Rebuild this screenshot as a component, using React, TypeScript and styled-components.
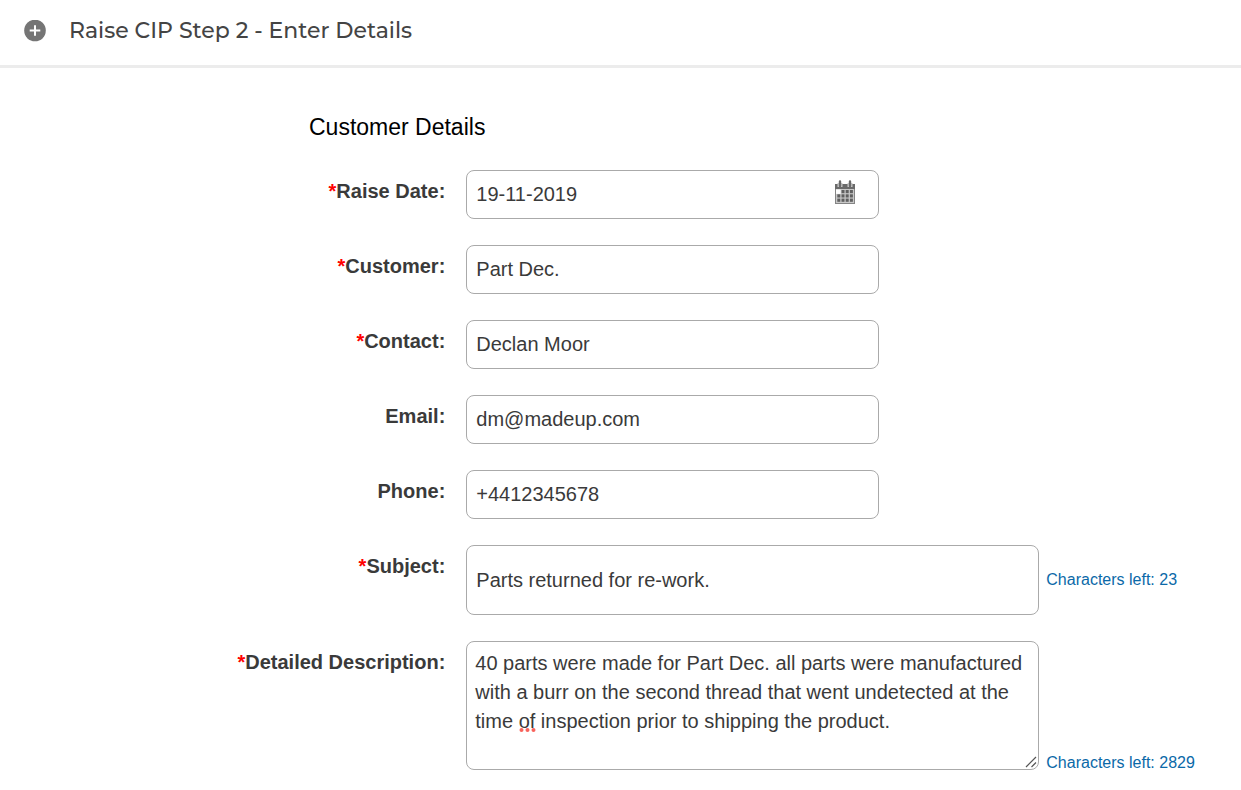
import React, { useId, useState } from "react";
import styled, { createGlobalStyle, css } from "styled-components";

const GlobalStyle = createGlobalStyle`
  * { box-sizing: border-box; }
  body {
    margin: 0;
    background: #fff;
    color: #3a3a3a;
    font: 20px/28px "Liberation Sans", Arial, sans-serif;
  }
`;

const Header = styled.header`
  display: flex;
  align-items: center;
  gap: 23px;
  height: 68px;
  padding: 0 24px 4px;
  border-bottom: 3px solid #ececec;
`;

const AddButton = styled.button`
  display: flex;
  padding: 0;
  border: 0;
  background: none;
  cursor: pointer;
`;

const PageTitle = styled.h1`
  margin: 0;
  color: #444;
  font: 500 22px/28px Montserrat, Inter, sans-serif;
`;

const Form = styled.form`
  padding: 44px 0 20px;
`;

const SectionTitle = styled.h2`
  margin: 0 0 28px;
  padding-left: 24.9%;
  color: #000;
  font-size: 23px;
  font-weight: 400;
  line-height: 30px;
`;

const Fields = styled.div`
  display: grid;
  gap: 26px;
`;

const Row = styled.div`
  display: grid;
  grid-template-columns: 73fr 127fr;
  column-gap: 21px;
`;

const Label = styled.label`
  padding-top: 7px;
  text-align: right;
  font-weight: 700;
`;

const Required = styled.span`
  color: #f00;
`;

const FieldArea = styled.div<{ $align?: string }>`
  display: flex;
  align-items: ${(p) => p.$align ?? "center"};
  gap: 7px;
`;

const Control = styled.div<{ $wide?: boolean }>`
  position: relative;
  width: ${(p) => (p.$wide ? 573 : 413)}px;
`;

const box = css`
  display: block;
  width: 100%;
  border: 1px solid #aaa;
  border-radius: 8px;
  background: #fff;
  color: #3a3a3a;
  font: inherit;
`;

const TextInput = styled.input<{ $tall?: boolean }>`
  ${box}
  height: ${(p) => (p.$tall ? 70 : 49)}px;
  padding: 0 9px;
`;

const TextArea = styled.textarea`
  ${box}
  height: 129px;
  padding: 7px 8px;
  line-height: 29px;
  resize: vertical;

  &::-webkit-resizer {
    background: none;
  }
`;

const Counter = styled.span`
  color: #0b69a8;
  font-size: 16px;
  line-height: 14px;
`;

const DateButton = styled.button`
  position: absolute;
  top: 10px;
  right: 23px;
  display: flex;
  padding: 0;
  border: 0;
  background: none;
  cursor: pointer;
`;

const SpellingMark = styled.svg`
  position: absolute;
  top: 86px;
  left: 53px;
  pointer-events: none;
`;

const ResizeGrip = styled.svg`
  position: absolute;
  right: 2px;
  bottom: 2px;
  pointer-events: none;
`;

function PlusIcon() {
  return (
    <svg width="22" height="22" viewBox="0 0 22 22" aria-hidden="true">
      <circle cx="11" cy="10" r="10.8" fill="#757575" transform="translate(0 .5)" />
      <path d="M11 5.2v10.6M5.7 10.5h10.6" stroke="#fff" strokeWidth="2" />
    </svg>
  );
}

function CalendarIcon() {
  const cells = [0, 1, 2].flatMap((row) => [0, 1, 2, 3].map((col) => ({ row, col })));
  return (
    <svg width="22" height="25" viewBox="0 0 22 25" aria-hidden="true">
      <path d="M1 4h20v20H1z" fill="#c8c8c8" />
      <path d="M1 4h20v5H1z" fill="#6a6a6a" />
      <path d="M1 9h1v15H1zM20 9h1v15h-1zM1 23h20v1H1z" fill="#858585" />
      <path d="M3.5 3h5v4h-5zM13.5 3h5v4h-5z" fill="#c8c8c8" />
      <path d="M6 1.5v4.5M16 1.5v4.5" stroke="#6a6a6a" strokeWidth="2.4" strokeLinecap="round" />
      {cells.map(({ row, col }) => (
        <rect
          key={`${row}-${col}`}
          x={row + col === 0 ? 2 : 3.3 + col * 4.2}
          y={row + col === 0 ? 9.5 : 10 + row * 4.3}
          width={row + col === 0 ? 4.6 : 3}
          height={row + col === 0 ? 4.4 : 3.2}
          fill={row + col === 0 ? "#fff" : "#606060"}
        />
      ))}
    </svg>
  );
}

type FieldProps = {
  label: string;
  value: string;
  type?: string;
  required?: boolean;
  date?: boolean;
  wide?: boolean;
  multiline?: boolean;
  limit?: number;
};

function Field({ label, value, type = "text", required, date, wide, multiline, limit }: FieldProps) {
  const id = useId();
  const [text, setText] = useState(value);
  return (
    <Row>
      <Label htmlFor={id}>
        {required && <Required>*</Required>}
        {label}:
      </Label>
      <FieldArea $align={multiline ? "flex-end" : "center"}>
        <Control $wide={wide}>
          {multiline ? (
            <TextArea id={id} value={text} spellCheck={false} onChange={(e) => setText(e.target.value)} />
          ) : (
            <TextInput id={id} type={type} $tall={wide} value={text} onChange={(e) => setText(e.target.value)} />
          )}
          {date && (
            <DateButton type="button" aria-label="Choose date">
              <CalendarIcon />
            </DateButton>
          )}
          {multiline && text === value && (
            <SpellingMark width="17" height="6" viewBox="0 0 17 6" aria-hidden="true">
              <g fill="#f8635c">
                <circle cx="2.5" cy="3" r="2" />
                <circle cx="8.5" cy="3" r="2" />
                <circle cx="14.5" cy="3" r="2" />
              </g>
            </SpellingMark>
          )}
          {multiline && (
            <ResizeGrip width="12" height="12" viewBox="0 0 12 12" aria-hidden="true">
              <path d="M1 11 11 1M6.5 11 11 6.5" stroke="#555" strokeWidth="1.2" />
            </ResizeGrip>
          )}
        </Control>
        {limit !== undefined && <Counter>Characters left: {limit - text.length}</Counter>}
      </FieldArea>
    </Row>
  );
}

const subject = "Parts returned for re-work.";
const description =
  "40 parts were made for Part Dec. all parts were manufactured with a burr on the second thread that went undetected at the time of inspection prior to shipping the product.";

export default function App() {
  return (
    <>
      <GlobalStyle />
      <Header>
        <AddButton type="button" aria-label="Add">
          <PlusIcon />
        </AddButton>
        <PageTitle>Raise CIP Step 2 - Enter Details</PageTitle>
      </Header>
      <main>
        <Form>
          <SectionTitle>Customer Details</SectionTitle>
          <Fields>
            <Field label="Raise Date" value="19-11-2019" required date />
            <Field label="Customer" value="Part Dec." required />
            <Field label="Contact" value="Declan Moor" required />
            <Field label="Email" type="email" value="dm@madeup.com" />
            <Field label="Phone" type="tel" value="+4412345678" />
            <Field label="Subject" value={subject} required wide limit={subject.length + 23} />
            <Field
              label="Detailed Description"
              value={description}
              required
              wide
              multiline
              limit={description.length + 2829}
            />
          </Fields>
        </Form>
      </main>
    </>
  );
}
